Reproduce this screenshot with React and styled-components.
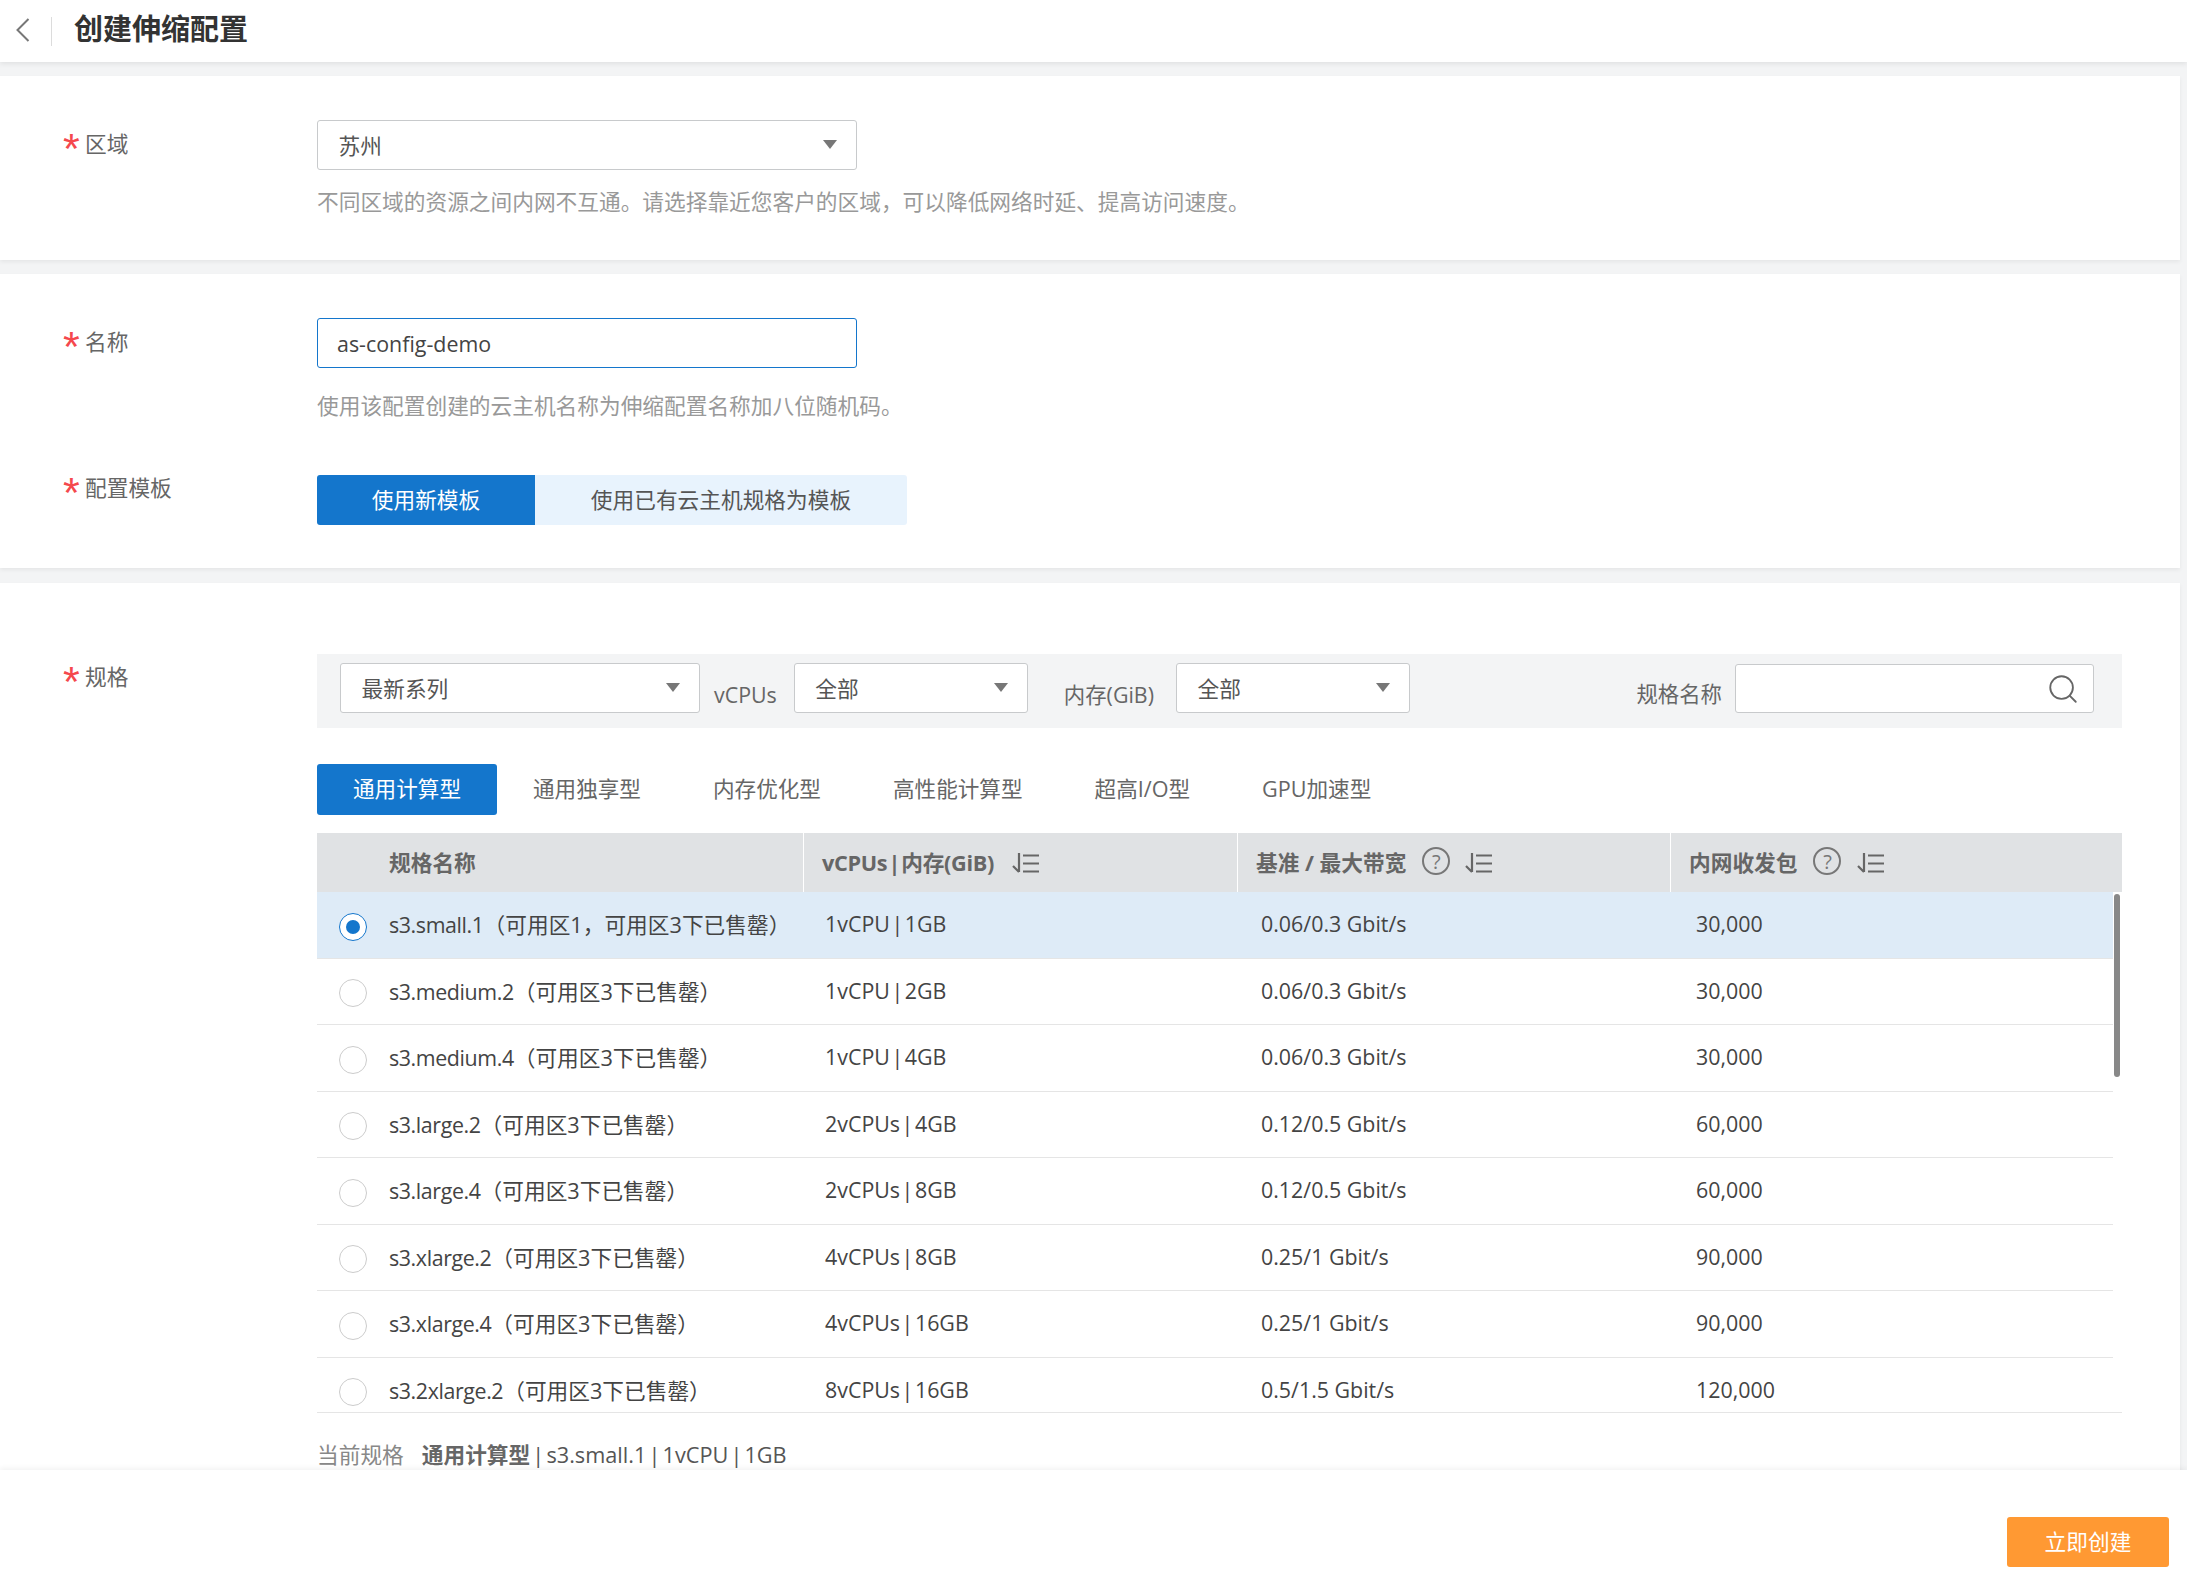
import React from 'react';
import styled, { createGlobalStyle } from 'styled-components';
import { Search } from 'lucide-react';

const GlobalStyle = createGlobalStyle`
  html, body {
    margin: 0;
    padding: 0;
    height: 100%;
    overflow: hidden;
    background: #f3f4f5;
    font-family: "Open Sans", "Noto Sans CJK SC", sans-serif;
    font-size: 21.7px;
    color: #555;
  }
  * {
    box-sizing: border-box;
  }
`;

const Page = styled.div`
  display: flex;
  flex-direction: column;
  height: 100vh;
`;

const Header = styled.header`
  flex: none;
  display: flex;
  align-items: center;
  height: 62px;
  padding-left: 16px;
  background: #fff;
  box-shadow: 0 2px 5px rgba(0, 0, 0, 0.08);
  position: relative;
`;

const BackButton = styled.svg`
  width: 14px;
  height: 24px;
  margin-top: -3px;
`;

const HeaderDivider = styled.span`
  width: 1px;
  height: 29px;
  margin: 0 22px 0 21px;
  background: #dcdcdc;
`;

const Title = styled.h1`
  margin: 0 0 5px;
  font-size: 29px;
  line-height: 40px;
  font-weight: 700;
  color: #333;
`;

const Main = styled.main`
  flex: 1;
  min-height: 0;
  overflow: hidden;
  padding: 14px 7px 0 0;
`;

const Card = styled.section`
  padding: ${props => props.$top || 44}px 0 43px 63px;
  margin-bottom: ${props => props.$bottom || 14}px;
  background: #fff;
  box-shadow: 0 2px 4px rgba(0, 0, 0, 0.06);
`;

const FormRow = styled.div`
  display: flex;
  margin-top: ${props => props.$gap || 0}px;
`;

const Label = styled.div`
  flex: none;
  display: flex;
  width: 254px;
  height: 30px;
  margin-top: ${props => props.$offset}px;
  line-height: 30px;
  color: #666;
`;

const Star = styled.span`
  width: 22px;
  height: 30px;
  font-family: "Liberation Sans", sans-serif;
  font-size: 43px;
  line-height: 39px;
  color: #f5484d;
`;

const Control = styled.div`
  flex: 1;
  min-width: 0;
`;

const Select = styled.div`
  flex: none;
  display: flex;
  align-items: center;
  justify-content: space-between;
  width: ${props => props.$width}px;
  height: 50px;
  padding: 0 19px 2px 20.5px;
  background: #fff;
  border: 1px solid #c8cacc;
  border-radius: 3px;
  color: #555;
`;

const Caret = styled.span`
  width: 0;
  height: 0;
  border-left: 7px solid transparent;
  border-right: 7px solid transparent;
  border-top: 9px solid #777;
`;

const NameInput = styled.div`
  display: flex;
  align-items: center;
  width: 540px;
  height: 50px;
  padding: 0 19px;
  border: 1px solid #1476cc;
  border-radius: 3px;
  font-size: 21.4px;
  color: #444;
`;

const Hint = styled.div`
  margin-top: ${props => props.$gap}px;
  line-height: 30px;
  color: #999;
`;

const Segments = styled.div`
  display: flex;
  height: 50px;
`;

const Segment = styled.div`
  display: flex;
  align-items: center;
  justify-content: center;
  width: ${props => props.$width}px;
  padding-bottom: 4px;
  background: ${props => (props.$active ? '#1476cc' : '#e8f3fd')};
  color: ${props => (props.$active ? '#fff' : '#555')};
  border-radius: ${props => (props.$active ? '3px 0 0 3px' : '0 3px 3px 0')};
`;

const FilterBar = styled.div`
  display: flex;
  align-items: flex-start;
  width: 1805px;
  height: 74px;
  padding: 9px 28px 0 23px;
  background: #f3f4f5;
`;

const FilterLabel = styled.span`
  margin: 17px ${props => props.$right}px 0 ${props => props.$left}px;
  line-height: 30px;
  font-size: 21.4px;
  color: #666;
`;

const SearchLabel = styled.span`
  margin: 16px 13px 0 auto;
  line-height: 30px;
  font-size: 21.4px;
  color: #666;
`;

const SearchBox = styled.div`
  flex: none;
  display: flex;
  align-items: center;
  justify-content: flex-end;
  width: 359px;
  height: 49px;
  margin-top: 1px;
  padding-right: 13px;
  background: #fff;
  border: 1px solid #c8cacc;
  border-radius: 3px;
  color: #666;
`;

const Tabs = styled.div`
  display: flex;
  margin-top: 36px;
`;

const Tab = styled.div`
  display: flex;
  align-items: center;
  height: 51px;
  padding: 0 36px 5px;
  font-size: 21.6px;
  background: ${props => (props.$active ? '#1476cc' : 'transparent')};
  color: ${props => (props.$active ? '#fff' : '#666')};
  border-radius: 3px;
`;

const Table = styled.div`
  width: 1805px;
  margin-top: 18px;
  border-bottom: 1px solid #e5e5e5;
`;

const TableHead = styled.div`
  display: grid;
  grid-template-columns: 486px 434px 433px 1fr;
  height: 59px;
  background: #e0e2e4;
`;

const HeadCell = styled.div`
  display: flex;
  align-items: center;
  padding: 0 0 2px ${props => props.$left}px;
  font-weight: 700;
  font-size: 21.7px;
  color: #666;
  border-left: ${props => (props.$first ? 'none' : '1px solid #fff')};
`;

const TightText = styled.span`
  word-spacing: -4px;
  letter-spacing: -0.35px;
`;

const HelpIcon = styled.span`
  display: inline-flex;
  align-items: center;
  justify-content: center;
  width: 28px;
  height: 28px;
  margin: -1px 0 0 16px;
  border: 2px solid #777;
  border-radius: 50%;
  font-size: 20px;
  font-weight: 400;
  color: #777;
`;

const SortSvg = styled.svg`
  flex: none;
  width: 28px;
  height: 20px;
  margin: 2px 0 0 ${props => props.$left}px;
`;

const RowsViewport = styled.div`
  position: relative;
  height: 520px;
  overflow: hidden;
`;

const Row = styled.div`
  display: grid;
  grid-template-columns: 72px 436px 436px 435px 1fr;
  align-items: center;
  width: 1796px;
  height: 66.5px;
  padding-bottom: 2px;
  font-size: 21.4px;
  background: ${props => (props.$selected ? '#deebf7' : '#fff')};
  border-bottom: 1px solid #e5e5e5;
  color: #444;
`;

const Radio = styled.span`
  display: flex;
  align-items: center;
  justify-content: center;
  width: 28px;
  height: 28px;
  margin: 6px 0 0 22px;
  background: #fff;
  border: 1px solid ${props => (props.$checked ? '#1476cc' : '#ccc')};
  border-radius: 50%;
  &::after {
    content: '';
    display: ${props => (props.$checked ? 'block' : 'none')};
    width: 14px;
    height: 14px;
    border-radius: 50%;
    background: #1476cc;
  }
`;

const FlavorName = styled.span`
  letter-spacing: -0.4px;
`;

const FlavorNote = styled.span`
  font-size: 21.7px;
  letter-spacing: 0;
`;

const VcpuText = styled.span`
  word-spacing: -4px;
`;

const ScrollThumb = styled.div`
  position: absolute;
  top: 2px;
  right: 2px;
  width: 6px;
  height: 183px;
  border-radius: 3px;
  background: #888;
`;

const Current = styled.div`
  display: flex;
  margin-top: 27px;
  line-height: 30px;
  color: #888;
`;

const CurrentValue = styled.span`
  margin-left: 18px;
  color: #555;
  word-spacing: -3.5px;
`;

const Strong = styled.b`
  font-weight: 700;
  color: #666;
`;

const Footer = styled.footer`
  flex: none;
  display: flex;
  justify-content: flex-end;
  height: 121px;
  padding: 47px 18px 0 0;
  background: #fff;
  box-shadow: 0 -2px 5px rgba(0, 0, 0, 0.05);
  position: relative;
`;

const SubmitButton = styled.button`
  width: 162px;
  height: 50px;
  padding: 0 0 3px;
  border: none;
  border-radius: 3px;
  background: #ff9933;
  color: #fff;
  font: inherit;
`;

const SortIcon = ({ left }) => (
  <SortSvg $left={left} viewBox="0 0 28 20" fill="none" stroke="#666" strokeWidth="2.2">
    <path d="M8 0V19M2 13L8 19" />
    <path d="M12 2.5H28M12 10.5H28M12 18.5H28" />
  </SortSvg>
);

const FLAVORS = [
  ['s3.small.1', '（可用区1，可用区3下已售罄）', '1vCPU | 1GB', '0.06/0.3 Gbit/s', '30,000'],
  ['s3.medium.2', '（可用区3下已售罄）', '1vCPU | 2GB', '0.06/0.3 Gbit/s', '30,000'],
  ['s3.medium.4', '（可用区3下已售罄）', '1vCPU | 4GB', '0.06/0.3 Gbit/s', '30,000'],
  ['s3.large.2', '（可用区3下已售罄）', '2vCPUs | 4GB', '0.12/0.5 Gbit/s', '60,000'],
  ['s3.large.4', '（可用区3下已售罄）', '2vCPUs | 8GB', '0.12/0.5 Gbit/s', '60,000'],
  ['s3.xlarge.2', '（可用区3下已售罄）', '4vCPUs | 8GB', '0.25/1 Gbit/s', '90,000'],
  ['s3.xlarge.4', '（可用区3下已售罄）', '4vCPUs | 16GB', '0.25/1 Gbit/s', '90,000'],
  ['s3.2xlarge.2', '（可用区3下已售罄）', '8vCPUs | 16GB', '0.5/1.5 Gbit/s', '120,000'],
];

const TABS = ['通用计算型', '通用独享型', '内存优化型', '高性能计算型', '超高I/O型', 'GPU加速型'];

const App = () => (
  <Page>
    <GlobalStyle />
    <Header>
      <BackButton viewBox="0 0 14 24" fill="none" stroke="#777" strokeWidth="2">
        <path d="M12.5 1L1.5 12L12.5 23" />
      </BackButton>
      <HeaderDivider />
      <Title>创建伸缩配置</Title>
    </Header>

    <Main>
      <Card>
        <FormRow>
          <Label $offset={9}><Star>*</Star>区域</Label>
          <Control>
            <Select $width={540}>苏州<Caret /></Select>
            <Hint $gap={17}>不同区域的资源之间内网不互通。请选择靠近您客户的区域，可以降低网络时延、提高访问速度。</Hint>
          </Control>
        </FormRow>
      </Card>

      <Card $bottom={15}>
        <FormRow>
          <Label $offset={9}><Star>*</Star>名称</Label>
          <Control>
            <NameInput>as-config-demo</NameInput>
            <Hint $gap={23}>使用该配置创建的云主机名称为伸缩配置名称加八位随机码。</Hint>
          </Control>
        </FormRow>
        <FormRow $gap={54}>
          <Label $offset={-2}><Star>*</Star>配置模板</Label>
          <Segments>
            <Segment $active $width={218}>使用新模板</Segment>
            <Segment $width={372}>使用已有云主机规格为模板</Segment>
          </Segments>
        </FormRow>
      </Card>

      <Card $top={71}>
        <FormRow>
          <Label $offset={8}><Star>*</Star>规格</Label>
          <Control>
            <FilterBar>
              <Select $width={360}>最新系列<Caret /></Select>
              <FilterLabel $left={14} $right={17}>vCPUs</FilterLabel>
              <Select $width={234}>全部<Caret /></Select>
              <FilterLabel $left={36} $right={22}>内存(GiB)</FilterLabel>
              <Select $width={234}>全部<Caret /></Select>
              <SearchLabel>规格名称</SearchLabel>
              <SearchBox><Search size={34} strokeWidth={1.3} /></SearchBox>
            </FilterBar>

            <Tabs>
              {TABS.map((tab, index) => (
                <Tab key={tab} $active={index === 0}>{tab}</Tab>
              ))}
            </Tabs>

            <Table>
              <TableHead>
                <HeadCell $first $left={72}>规格名称</HeadCell>
                <HeadCell $left={18}><TightText>vCPUs | 内存(GiB)</TightText><SortIcon left={17} /></HeadCell>
                <HeadCell $left={18}>基准 / 最大带宽<HelpIcon>?</HelpIcon><SortIcon left={14} /></HeadCell>
                <HeadCell $left={18}>内网收发包<HelpIcon>?</HelpIcon><SortIcon left={15} /></HeadCell>
              </TableHead>
              <RowsViewport>
                {FLAVORS.map(([name, note, vcpus, bandwidth, pps], index) => (
                  <Row key={name} $selected={index === 0}>
                    <Radio $checked={index === 0} />
                    <FlavorName>{name}<FlavorNote>{note}</FlavorNote></FlavorName>
                    <VcpuText>{vcpus}</VcpuText>
                    <span>{bandwidth}</span>
                    <span>{pps}</span>
                  </Row>
                ))}
                <ScrollThumb />
              </RowsViewport>
            </Table>

            <Current>
              当前规格
              <CurrentValue><Strong>通用计算型</Strong> | s3.small.1 | 1vCPU | 1GB</CurrentValue>
            </Current>
          </Control>
        </FormRow>
      </Card>
    </Main>

    <Footer>
      <SubmitButton>立即创建</SubmitButton>
    </Footer>
  </Page>
);

export default App;
